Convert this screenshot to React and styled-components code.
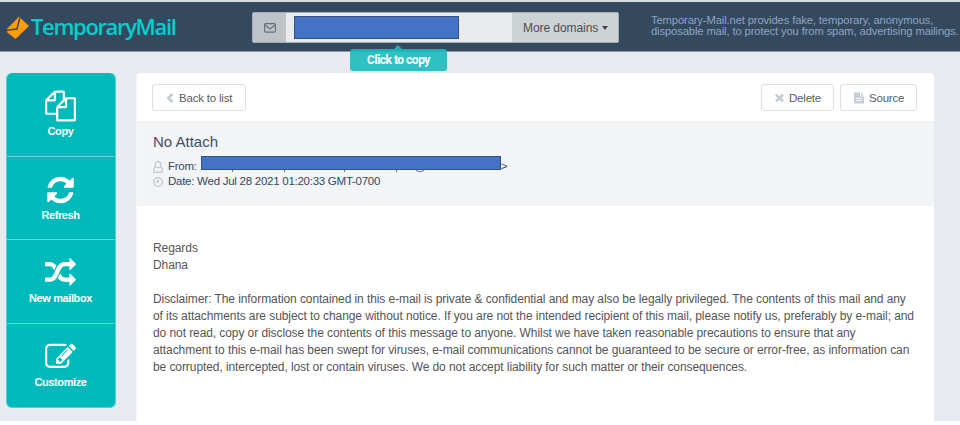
import React from "react";
import styled, { createGlobalStyle } from "styled-components";

const Global = createGlobalStyle`
  * { box-sizing: border-box; }
  body { margin: 0; background: #fff; font-family: "Liberation Sans", Arial, sans-serif; color: #555; }
`;
const Page = styled.div`
  height: 421px; background: #e7ebef; overflow: hidden;
`;
const Header = styled.header`
  height: 52px; background: #34495e; border-top: 2px solid #d5dce2;
  display: flex; align-items: flex-start; border-bottom: 1px solid #8a98a6;
`;
const Brand = styled.div`
  width: 252px; flex: none; height: 49px; padding: 0 0 0 6px; display: flex; align-items: center;
  svg { flex: none; margin-top: 2px; }
`;
const BrandName = styled.span`
  font: 600 22px/28px "Open Sans", sans-serif; color: #00cfcf; letter-spacing: -1.35px;
  white-space: nowrap; margin: -1px 0 0 2px;
`;
const MailBar = styled.div`
  position: relative; margin-top: 10px; width: 367px; height: 31px; display: flex;
  background: #e9ecef; border: 1px solid #a5adb4; border-radius: 2px; flex: none;
`;
const MailIcon = styled.div`
  width: 33px; background: #bdc3c7; display: flex; align-items: center; justify-content: center;
`;
const Address = styled.div`
  flex: 1; padding: 3px 0 0 8px;
`;
const Redaction = styled.div`
  width: ${p => p.$w}px; height: ${p => p.$h}px; background: #4472c4; border: 1px solid #2f528f;
`;
const Domains = styled.div`
  width: 106px; background: #cdd2d5; color: #4b4f52; font-size: 12px; letter-spacing: -.07px; display: flex;
  align-items: center; padding-left: 11px; white-space: nowrap;
`;
const Caret = styled.i`
  border: 3.5px solid transparent; border-top: 4px solid #444; border-bottom: 0; margin-left: 4px;
`;
const Tooltip = styled.div`
  position: absolute; left: 97px; top: 36px; width: 97px; height: 22px; z-index: 2;
  background: rgba(27, 188, 188, .9); border-radius: 3px; color: #fff; text-align: center;
  font: 700 12px/22px Roboto, sans-serif; letter-spacing: -.5px;
  &::before {
    content: ""; position: absolute; left: 44px; top: -4px;
    border: 4px solid transparent; border-top: 0; border-bottom-color: #1bb0b5;
  }
`;
const Tagline = styled.p`
  margin: 13px 0 0 32px; font-size: 11.2px; letter-spacing: -.11px; line-height: 11px; color: #8ea4c4; white-space: nowrap;
`;
const Columns = styled.div`
  display: flex; padding: 21px 0 0 6px; height: 369px;
`;
const Sidebar = styled.nav`
  width: 110px; height: 335px; background: #00b9bb; border-radius: 6px; overflow: hidden; flex: none;
  border: 1px solid #55cfd0; border-top: 0;
`;
const Action = styled.div`
  height: 83.5px; border-bottom: ${p => (p.$last ? "0" : "1px solid #66d5d6")};
  padding: 17px 1px 0 0; display: flex; flex-direction: column; align-items: center;
  font-size: 11px; letter-spacing: -.4px; font-weight: 700; color: #fff; line-height: 14px;
  svg { display: block; height: 32px; flex: none; margin-bottom: 2px; }
`;
const Panel = styled.main`
  width: 798px; margin-left: 20px; background: #fff; border-radius: 4px 4px 0 0; flex: none;
  border-left: 1px solid #f5f7f8;
`;
const Toolbar = styled.div`
  height: 48px; padding: 11px 17px 0 15px; display: flex; gap: 6px;
`;
const ToolButton = styled.div`
  width: ${p => p.$w}px; height: 27px; border: 1px solid #dce0e6; border-radius: 3px;
  display: flex; align-items: center; font-size: 11.5px; letter-spacing: -.2px; color: #585b5f; padding-left: 13px;
  margin-right: ${p => (p.$push ? "auto" : "0")}; white-space: nowrap;
  svg { margin-right: 5px; flex: none; }
`;
const MailHead = styled.section`
  height: 85px; background: #f2f4f6; padding: 12px 0 0 16px; color: #34495e;
`;
const Subject = styled.h1`
  margin: 0; font-size: 15px; font-weight: 400; line-height: 18px; color: #44505e;
`;
const Meta = styled.div`
  height: 15px; margin-top: ${p => p.$top || 0}px; display: flex; align-items: center;
  font-size: 11.5px; letter-spacing: -.26px; line-height: 15px; white-space: nowrap;
  svg { margin-right: 5px; flex: none; }
`;
const Sender = styled.span`
  position: relative; width: 300px; height: 15px; margin-left: 4px;
  svg { position: absolute; left: 0; top: 11px; }
`;
const SenderCover = styled.div`
  position: relative; margin-top: -3px;
`;
const Body = styled.article`
  padding: 34px 0 0 16px; font-size: 12px; letter-spacing: -.08px; line-height: 17px; color: #555;
  white-space: nowrap;
`;
const Line = styled.div`
  height: 17px;
`;

const Glyph = ({ d, size, fill = "#fff" }) => (
  <svg width={size} height={size} viewBox="0 0 1792 1792" fill={fill}><path d={d} /></svg>
);

const COPY = "M1696 384q40 0 68 28t28 68v1216q0 40-28 68t-68 28h-960q-40 0-68-28t-28-68v-288h-544q-40 0-68-28t-28-68v-672q0-40 20-88t48-76l408-408q28-28 76-48t88-20h416q40 0 68 28t28 68v328q68-40 128-40h416zm-544 213l-299 299h299v-299zm-640-384l-299 299h299v-299zm196 647l316-316v-416h-384v416q0 40-28 68t-68 28h-416v640h512v-256q0-40 20-88t48-76zm956 804v-1152h-384v416q0 40-28 68t-68 28h-416v640h896z";
const REFRESH = "M1639 1056q0 5-1 7-64 268-268 434.5t-478 166.5q-146 0-282.5-55t-243.5-157l-129 129q-19 19-45 19t-45-19-19-45v-448q0-26 19-45t45-19h448q26 0 45 19t19 45-19 45l-137 137q71 66 161 102t187 36q134 0 250-65t186-179q11-17 53-117 8-23 30-23h192q13 0 22.5 9.5t9.5 22.5zm25-800v448q0 26-19 45t-45 19h-448q-26 0-45-19t-19-45 19-45l138-138q-148-137-349-137-134 0-250 65t-186 179q-11 17-53 117-8 23-30 23h-199q-13 0-22.5-9.5t-9.5-22.5v-7q65-268 270-434.5t480-166.5q146 0 284 55.5t245 156.5l130-129q19-19 45-19t45 19 19 45z";
const RANDOM = "M666 481q-60 92-137 273-22-45-37-72.5t-40.5-63.5-51-56.5-63-35-81.5-14.5h-224q-14 0-23-9t-9-23v-192q0-14 9-23t23-9h224q250 0 410 225zm1126 799q0 14-9 23l-320 320q-9 9-23 9-13 0-22.5-9.5t-9.5-22.5v-192q-32 0-85 .5t-81 1-73-1-71-5-64-10.5-63-18.5-58-28.5-59-40-55-53.5-56-69.5q59-93 136-273 22 45 37 72.5t40.5 63.5 51 56.5 63 35 81.5 14.5h256v-192q0-14 9-23t23-9q12 0 24 10l319 319q9 9 9 23zm0-896q0 14-9 23l-320 320q-9 9-23 9-13 0-22.5-9.5t-9.5-22.5v-192h-256q-48 0-87 15t-69 45-51 61.5-45 77.5q-32 62-78 171-29 66-49.5 111t-54 105-64 100-74 83-90 68.5-106.5 42-128 16.5h-224q-14 0-23-9t-9-23v-192q0-14 9-23t23-9h224q48 0 87-15t69-45 51-61.5 45-77.5q32-62 78-171 29-66 49.5-111t54-105 64-100 74-83 90-68.5 106.5-42 128-16.5h256v-192q0-14 9-23t23-9q12 0 24 10l319 319q9 9 9 23z";
const EDIT = "M888 1184l116-116-152-152-116 116v56h96v96h56zm440-720q-16-16-33 1l-350 350q-17 17-1 33t33-1l350-350q17-17 1-33zm80 594v190q0 119-84.5 203.5t-203.5 84.5h-832q-119 0-203.5-84.5t-84.5-203.5v-832q0-119 84.5-203.5t203.5-84.5h832q63 0 117 25 15 7 18 23 3 17-9 29l-49 49q-14 14-32 8-23-6-45-6h-832q-66 0-113 47t-47 113v832q0 66 47 113t113 47h832q66 0 113-47t47-113v-126q0-13 9-22l64-64q15-15 35-7t20 29zm-96-738l288 288-672 672h-288v-288zm444 132l-92 92-288-288 92-92q28-28 68-28t68 28l152 152q28 28 28 68t-28 68z";

const LINES = [
  "Regards", "Dhana", "",
  "Disclaimer: The information contained in this e-mail is private & confidential and may also be legally privileged. The contents of this mail and any",
  "of its attachments are subject to change without notice. If you are not the intended recipient of this mail, please notify us, preferably by e-mail; and",
  "do not read, copy or disclose the contents of this message to anyone. Whilst we have taken reasonable precautions to ensure that any",
  "attachment to this e-mail has been swept for viruses, e-mail communications cannot be guaranteed to be secure or error-free, as information can",
  "be corrupted, intercepted, lost or contain viruses. We do not accept liability for such matter or their consequences.",
];

export default function App() {
  return (
    <>
      <Global />
      <Page>
        <Header>
          <Brand>
            <svg width="23" height="24" viewBox="0 0 23 24">
              <path d="M13 .8 23 10 9.500 23 1.300 16.500.8 13Z" fill="#ff9c08" />
              <path d="M1 14.200 11 13 13.800 2" fill="none" stroke="#34495e" strokeWidth="1.400" />
            </svg>
            <BrandName>TemporaryMail</BrandName>
          </Brand>
          <MailBar>
            <MailIcon>
              <svg width="12" height="10" viewBox="0 0 12 10" fill="none" stroke="#686e73" strokeWidth="1.100">
                <rect x=".6" y=".6" width="10.800" height="8.500" rx="1" />
                <path d="M1 2 6 6 11 2" />
              </svg>
            </MailIcon>
            <Address><Redaction $w={165} $h={23} /></Address>
            <Domains>More domains<Caret /></Domains>
            <Tooltip>Click to copy</Tooltip>
          </MailBar>
          <Tagline>
            Temporary-Mail.net provides fake, temporary, anonymous,<br />
            disposable mail, to protect you from spam, advertising mailings.
          </Tagline>
        </Header>
        <Columns>
          <Sidebar>
            <Action><Glyph d={COPY} size={31} />Copy</Action>
            <Action><Glyph d={REFRESH} size={31} />Refresh</Action>
            <Action><Glyph d={RANDOM} size={31} />New mailbox</Action>
            <Action $last><Glyph d={EDIT} size={31} />Customize</Action>
          </Sidebar>
          <Panel>
            <Toolbar>
              <ToolButton $w={94} $push>
                <svg width="8" height="10" viewBox="0 0 8 10" fill="none" stroke="#c5cbd1" strokeWidth="2.800"><path d="M6.500 1 2.300 5 6.500 9" /></svg>
                Back to list
              </ToolButton>
              <ToolButton $w={73}>
                <svg width="9" height="8" viewBox="0 0 9 8" fill="none" stroke="#c5cbd1" strokeWidth="2.600"><path d="M1 .7 8 7.300M8 .7 1 7.300" /></svg>
                Delete
              </ToolButton>
              <ToolButton $w={77}>
                <svg width="10" height="12" viewBox="0 0 10 12"><path d="M0 .5H6V4.500H10V11.500H0ZM7 .5 10 3.500H7Z" fill="#c8cdd3" /><path d="M2 6.500H8M2 8.500H8" stroke="#fff" strokeWidth=".8" /></svg>
                Source
              </ToolButton>
            </Toolbar>
            <MailHead>
              <Subject>No Attach</Subject>
              <Meta $top={8}>
                <svg width="10" height="12" viewBox="0 0 10 12" fill="none" stroke="#c0c7ce" strokeWidth="1.200"><ellipse cx="5" cy="3.700" rx="2.800" ry="3.100" /><path d="M2.500 5.800Q.6 6.300.6 9.500.6 11.400 2 11.400H8Q9.400 11.400 9.400 9.500 9.400 6.300 7.500 5.800" /></svg>
                From:
                <Sender>
                  <svg width="301" height="7" viewBox="0 0 301 7" fill="none" stroke="#697888">
                    <path d="M31.500 0V2M83.500 0V2M143.500 0V2M195.500 0V2M215 .5Q219 3.200 223 .5" />
                  </svg>
                  <SenderCover><Redaction $w={300} $h={14} /></SenderCover>
                </Sender>
                &gt;
              </Meta>
              <Meta>
                <svg width="10" height="10" viewBox="0 0 10 10" fill="none" stroke="#c0c7ce" strokeWidth="1.300"><circle cx="5" cy="5" r="4.300" /><path d="M5.200 2.500V5.200H3" /></svg>
                Date: Wed Jul 28 2021 01:20:33 GMT-0700
              </Meta>
            </MailHead>
            <Body>
              {LINES.map((t, i) => <Line key={i}>{t}</Line>)}
            </Body>
          </Panel>
        </Columns>
      </Page>
    </>
  );
}
